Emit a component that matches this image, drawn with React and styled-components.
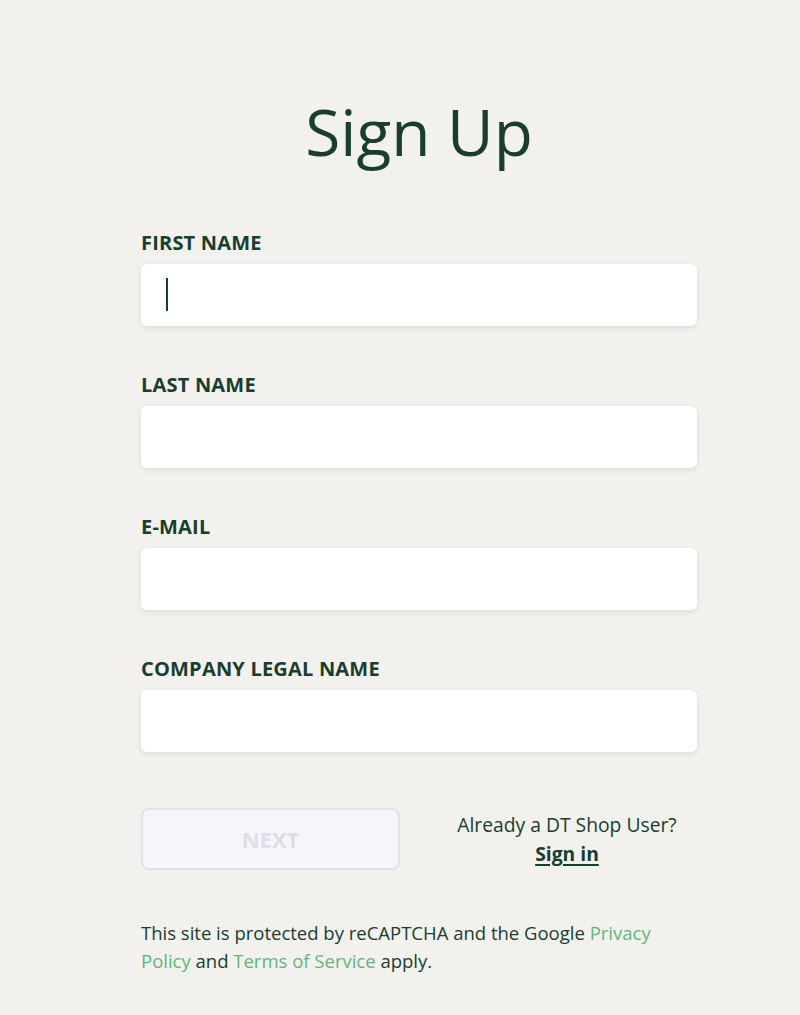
import React from "react";
import styled, { createGlobalStyle } from "styled-components";

const GlobalStyle = createGlobalStyle`
  html, body {
    margin: 0;
    padding: 0;
    background: #f2f1ee;
  }
  body {
    font-family: "Open Sans", "Noto Sans", sans-serif;
    color: #173e2f;
  }
`;

const Page = styled.div`
  width: 556px;
  margin: 0 auto;
  padding: 92px 0 40px;
  transform: translateX(19px);
`;

const Title = styled.h1`
  margin: 0 0 57px;
  text-align: center;
  font-size: 64px;
  font-weight: 400;
  line-height: 80px;
  color: #173e2f;
`;

const Field = styled.div`
  display: flex;
  flex-direction: column;
  margin-bottom: 45px;
`;

const Label = styled.label`
  font-size: 20px;
  font-weight: 700;
  line-height: 28px;
  margin-bottom: 7px;
  color: #173e2f;
  letter-spacing: 0.2px;
`;

const InputWrap = styled.div`
  position: relative;
`;

const Input = styled.input`
  box-sizing: border-box;
  width: 100%;
  height: 62px;
  padding: 0 24px;
  border: none;
  border-radius: 6px;
  background: #fff;
  box-shadow: 0 2px 6px rgba(0, 0, 0, 0.09);
  font-family: inherit;
  font-size: 18px;
  color: #173e2f;
  outline: none;
`;

const Caret = styled.span`
  position: absolute;
  left: 25px;
  top: 14px;
  width: 1.5px;
  height: 33px;
  background: #173e2f;
`;

const Actions = styled.div`
  display: flex;
  align-items: center;
  gap: 37px;
  margin-top: 56px;
`;

const NextButton = styled.button`
  box-sizing: border-box;
  width: 259px;
  height: 62px;
  border: 2px solid #e1e1eb;
  border-radius: 8px;
  background: #f6f6fa;
  color: #dedee8;
  font-family: inherit;
  font-size: 22px;
  font-weight: 700;
  cursor: default;
`;

const SignInBox = styled.div`
  flex: 1;
  text-align: center;
  font-size: 19.3px;
  line-height: 29px;
  color: #173e2f;
`;

const SignInLink = styled.a`
  display: block;
  font-weight: 700;
  color: #173e2f;
  text-decoration: underline;
  text-underline-offset: 3px;
  text-decoration-thickness: 2px;
`;

const Notice = styled.p`
  margin: 49px 0 0;
  font-size: 18.5px;
  line-height: 28px;
  color: #173e2f;
`;

const GreenLink = styled.a`
  color: #5db87a;
  text-decoration: none;
`;

const fields = ["FIRST NAME", "LAST NAME", "E-MAIL", "COMPANY LEGAL NAME"];

export default function App() {
  return (
    <>
      <GlobalStyle />
      <Page>
        <Title>Sign Up</Title>
        {fields.map((name, i) => (
          <Field key={name}>
            <Label>{name}</Label>
            <InputWrap>
              <Input type="text" />
              {i === 0 && <Caret />}
            </InputWrap>
          </Field>
        ))}
        <Actions>
          <NextButton disabled>NEXT</NextButton>
          <SignInBox>
            Already a DT Shop User?
            <SignInLink href="#">Sign in</SignInLink>
          </SignInBox>
        </Actions>
        <Notice>
          This site is protected by reCAPTCHA and the Google{" "}
          <GreenLink href="#">Privacy Policy</GreenLink> and{" "}
          <GreenLink href="#">Terms of Service</GreenLink> apply.
        </Notice>
      </Page>
    </>
  );
}
